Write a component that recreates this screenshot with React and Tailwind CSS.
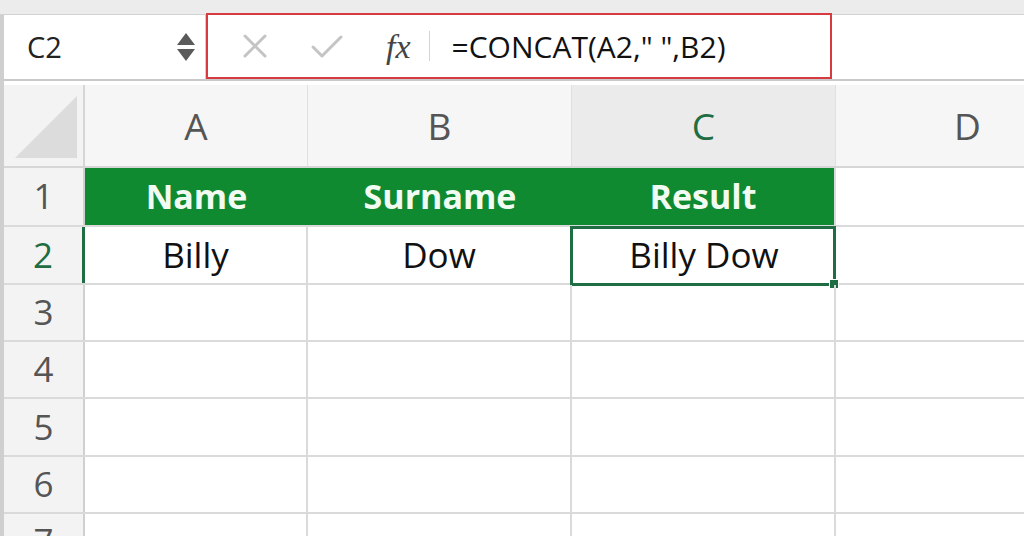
const cols = [
  { key: "A", w: "w-[223px]" },
  { key: "B", w: "w-[264px]" },
  { key: "C", w: "w-[264px]", active: true },
  { key: "D", w: "w-[264px]" },
];

const rows = [
  { n: 1, h: "h-[59px]", cells: ["Name", "Surname", "Result", ""], head: true },
  { n: 2, h: "h-[58px]", cells: ["Billy", "Dow", "Billy Dow", ""], active: true },
  { n: 3, h: "h-[57px]", cells: ["", "", "", ""] },
  { n: 4, h: "h-[57px]", cells: ["", "", "", ""] },
  { n: 5, h: "h-[58px]", cells: ["", "", "", ""] },
  { n: 6, h: "h-[57px]", cells: ["", "", "", ""] },
  { n: 7, h: "h-[57px]", cells: ["", "", "", ""] },
];

const cellFont = { fontFamily: "'Open Sans', Lato, sans-serif" };
const uiFont = { fontFamily: "'Open Sans', 'Liberation Sans', sans-serif" };

function FormulaBar() {
  return (
    <div className="flex h-[66px] border-b-[2px] border-[#c9c9c9] bg-white" style={uiFont}>
      <div className="flex w-[202px] items-center justify-between border-r border-[#d0d0d0] pl-[23px] pr-[10px]">
        <span className="text-[29px] text-[#222]">C2</span>
        <div className="flex flex-col items-center gap-[4px]">
          <svg width="18" height="12" viewBox="0 0 18 12"><path d="M9 0 L18 12 L0 12 Z" fill="#5a5a5a" /></svg>
          <svg width="18" height="12" viewBox="0 0 18 12"><path d="M0 0 L18 0 L9 12 Z" fill="#5a5a5a" /></svg>
        </div>
      </div>
      <div className="-mt-[2px] flex h-[66px] w-[626px] items-center border-[2px] border-[#d63b3f] bg-white">
        <div className="ml-[32px] flex w-[130px] items-center">
          <svg width="30" height="30" viewBox="0 0 30 30">
            <path d="M5 5 L25 25 M25 5 L5 25" stroke="#c4c4c4" strokeWidth="3" strokeLinecap="round" />
          </svg>
          <svg className="ml-[40px]" width="34" height="30" viewBox="0 0 34 30">
            <path d="M3 16 L12 25 L31 6" stroke="#c4c4c4" strokeWidth="3" fill="none" strokeLinecap="round" strokeLinejoin="round" />
          </svg>
        </div>
        <span className="ml-[16px] text-[34px] italic text-[#444]" style={{ fontFamily: "'Liberation Serif', serif" }}>
          fx
        </span>
        <div className="ml-[18px] h-[30px] w-px bg-[#d4d4d4]" />
        <span className="ml-[22px] text-[30px] text-[#111]" style={cellFont}>
          =CONCAT(A2," ",B2)
        </span>
      </div>
    </div>
  );
}

export default function App() {
  return (
    <div className="h-[536px] w-[1024px] overflow-hidden bg-white">
      <div className="h-[15px] border-b border-[#d2d2d2] bg-[#ececec]" />
      <div className="border-l-[4px] border-[#cfcfcf]">
        <FormulaBar />
        <div className="h-[4px] bg-white" />
        {/* column headers */}
        <div className="flex h-[83px] border-b-[2px] border-[#d6d6d6]" style={uiFont}>
          <div className="relative w-[81px] shrink-0 border-r-[2px] border-[#d6d6d6] bg-[#f3f3f3]">
            <svg className="absolute bottom-[8px] right-[6px]" width="62" height="62" viewBox="0 0 62 62">
              <path d="M62 0 L62 62 L0 62 Z" fill="#dcdcdc" />
            </svg>
          </div>
          {cols.map((c) => (
            <div
              key={c.key}
              className={`${c.w} flex shrink-0 items-center justify-center border-r border-[#e0e0e0] text-[37px] ${
                c.active ? "bg-[#ebebeb] text-[#1f6e43]" : "bg-[#f6f6f6] text-[#555]"
              }`}
            >
              {c.key}
            </div>
          ))}
        </div>
        {rows.map((r) => (
          <div key={r.n} className={`flex ${r.h} border-b-[2px] border-[#dadada]`}>
            <div
              className={`flex w-[81px] shrink-0 items-center justify-center bg-[#f3f3f3] text-[35px] ${
                r.active ? "border-r-[3px] border-[#1f6e43] text-[#1f6e43]" : "border-r-[2px] border-[#d0d0d0] text-[#555]"
              }`}
              style={uiFont}
            >
              {r.n}
            </div>
            {r.cells.map((v, i) => {
              const isSel = r.active && i === 2;
              const green = r.head && i < 3;
              return (
                <div
                  key={i}
                  className={`${cols[i].w} relative flex shrink-0 items-center justify-center ${
                    green ? "bg-[#0f8a30] text-[34px] font-bold text-[#f2fbf2]" : "text-[35px] text-[#111]"
                  } ${i < 2 && !green ? "border-r-[2px] border-[#dadada]" : ""} ${
                    i === 2 && !isSel ? "border-r-[2px] border-[#dadada]" : ""
                  }`}
                  style={cellFont}
                >
                  {isSel && (
                    <div className="pointer-events-none absolute -left-[2px] -top-[1px] h-[60px] w-[266px] border-[3px] border-[#1f6e43]">
                      <div className="absolute -bottom-[6px] -right-[6px] h-[10px] w-[10px] border border-white bg-[#1f6e43]" />
                    </div>
                  )}
                  {v}
                </div>
              );
            })}
          </div>
        ))}
      </div>
    </div>
  );
}
